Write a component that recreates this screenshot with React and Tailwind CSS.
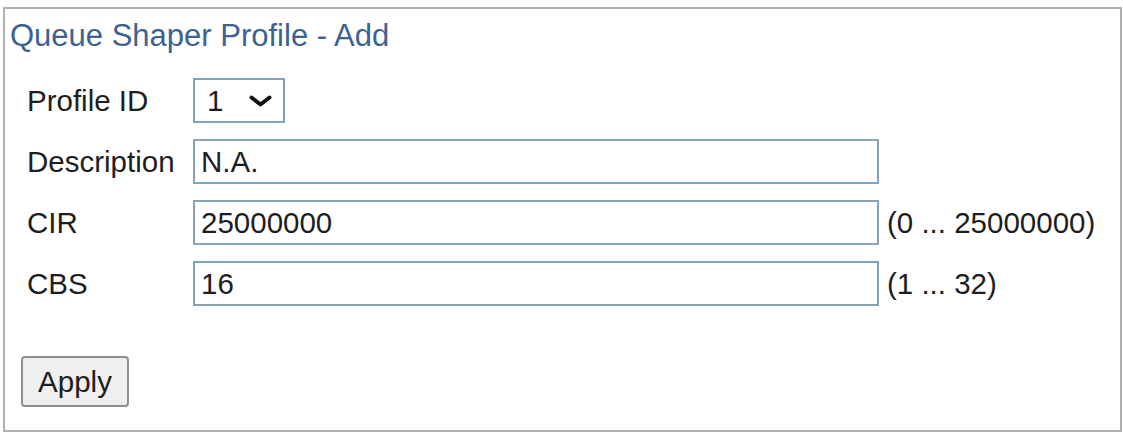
import React from "react";

const font = { fontFamily: '"Liberation Sans", Arial, sans-serif' };

function Row({ label, children, hint }) {
  return (
    <div className="flex items-center h-[45px]">
      <div className="w-[166px] shrink-0 text-[29.5px] text-[#1e1e1e] leading-none">{label}</div>
      {children}
      {hint && <div className="ml-[8px] text-[29.5px] text-[#1e1e1e] leading-none whitespace-nowrap">{hint}</div>}
    </div>
  );
}

function TextBox({ value }) {
  return (
    <div className="w-[686px] h-[45px] border-2 border-[#84a2bd] bg-white flex items-center pl-[6px] text-[29.5px] text-[#1e1e1e] leading-none">
      {value}
    </div>
  );
}

export default function App() {
  return (
    <div className="w-[1123px] h-[434px] bg-white pt-[7px] pl-[3px]" style={font}>
      <div className="w-[1119px] h-[425px] border-2 border-[#b0b0b0] flex flex-col">
        <div className="pt-[9px] pl-[5px] text-[31px] leading-[36px] text-[#3d6291]">Queue Shaper Profile - Add</div>
        <div className="pl-[22px] mt-[24px] flex flex-col gap-[16px]">
          <Row label="Profile ID">
            <div className="w-[92px] h-[45px] border-2 border-[#84a2bd] bg-white flex items-center pl-[12px] text-[29.5px] text-[#1e1e1e] leading-none">
              <span>1</span>
              <svg className="ml-[26px]" width="23" height="12" viewBox="0 0 23 12">
                <path d="M2.5 2.5 L11.5 9.5 L20.5 2.5" fill="none" stroke="#111" strokeWidth="4" strokeLinecap="round" strokeLinejoin="round" />
              </svg>
            </div>
          </Row>
          <Row label="Description">
            <TextBox value="N.A." />
          </Row>
          <Row label="CIR" hint="(0 ... 25000000)">
            <TextBox value="25000000" />
          </Row>
          <Row label="CBS" hint="(1 ... 32)">
            <TextBox value="16" />
          </Row>
        </div>
        <div className="pl-[16px] mt-[50px]">
          <button className="w-[108px] h-[51px] border-2 border-[#8e8e8e] rounded-[4px] bg-[#efefef] text-[29.5px] text-[#1e1e1e] leading-none">
            Apply
          </button>
        </div>
      </div>
    </div>
  );
}
